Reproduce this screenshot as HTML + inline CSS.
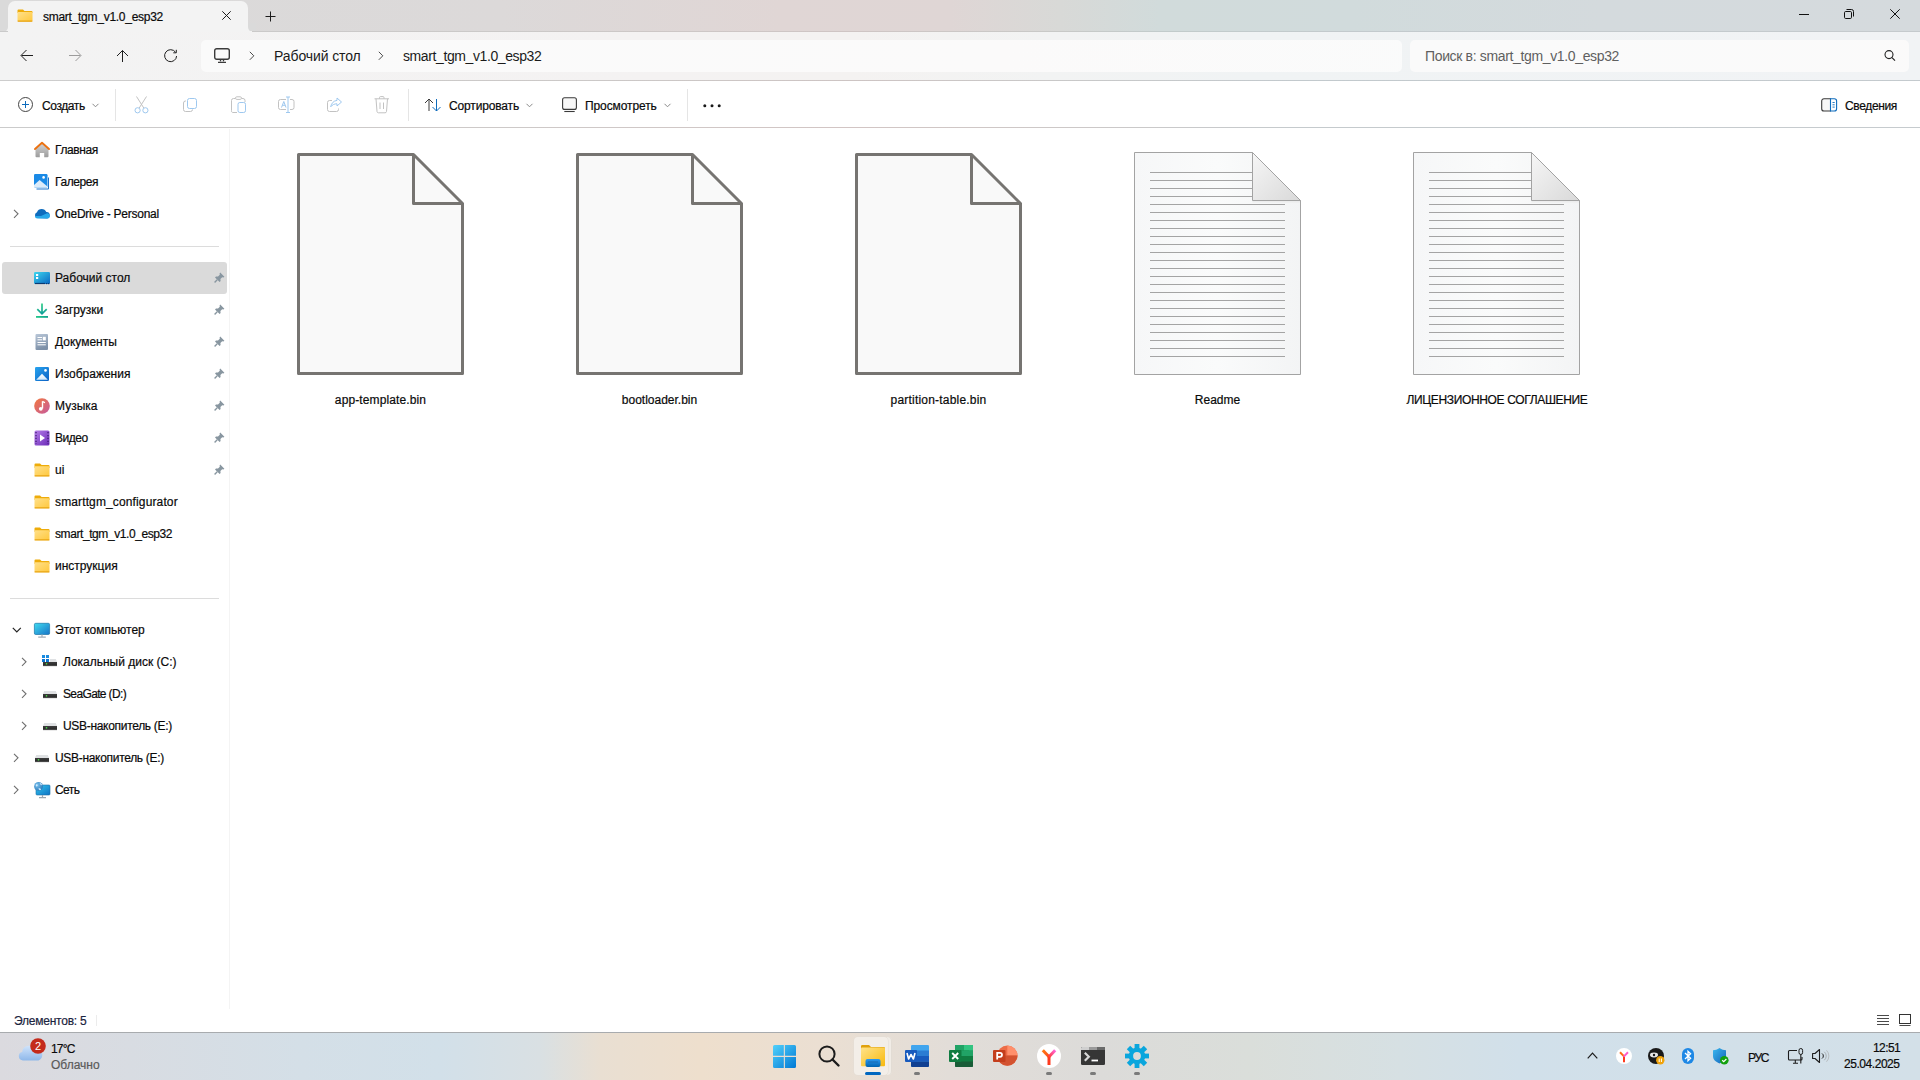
<!DOCTYPE html>
<html><head><meta charset="utf-8">
<style>
*{box-sizing:border-box}
html,body{margin:0;padding:0;width:1920px;height:1080px;overflow:hidden;background:#fff;font-family:"Liberation Sans",sans-serif;color:#1a1a1a}
.a{position:absolute}
.t{position:absolute;white-space:nowrap;font-size:12px;line-height:12px;color:#0a0a0a;-webkit-text-stroke:0.2px currentColor}
svg{position:absolute;overflow:visible}
#titlebar{left:0;top:0;width:1920px;height:32px;background:linear-gradient(90deg,#dadada 0px,#dcd9d9 500px,#e0d6d5 780px,#dfd6d5 950px,#d8d9d7 1060px,#d1dbdb 1160px,#d1dbdc 1350px,#d4dadd 1600px,#d5dadd 1920px)}
#addr{left:0;top:32px;width:1920px;height:48px;background:linear-gradient(90deg,#f3f3f3 0px,#f4f2f2 650px,#f4f2f1 850px,#f2f3f3 1050px,#f0f3f4 1250px,#f1f3f5 1920px)}
#tline{left:0;top:31px;width:1920px;height:1px;background:linear-gradient(90deg,#cacaca 0px,#cbc9c8 500px,#cfc5c4 850px,#c8c9c7 1060px,#c2cbcb 1160px,#c3cacd 1400px,#c5cacd 1920px)}
#aline{left:0;top:80px;width:1920px;height:1px;background:linear-gradient(90deg,#cdcdcd 0px,#cbc8c7 600px,#cdc4c3 850px,#c9c8c8 1050px,#c2c9cd 1300px,#c4cace 1920px)}
#cline{left:0;top:127px;width:1920px;height:1px;background:linear-gradient(90deg,#cbcbcb 0px,#cdc9c8 500px,#d2c5c4 850px,#cdc8c7 1050px,#c5cacd 1300px,#c6cbce 1920px)}
#cmd{left:0;top:81px;width:1920px;height:46px;background:#fff}
#tab{left:8px;top:1px;width:240px;height:31px;background:#f3f3f3;border-radius:7px 7px 0 0}
.box{position:absolute;top:40px;height:32px;background:linear-gradient(90deg,#fafafa 0px,#fbfafa 800px,#fafbfb 1300px);border-radius:5px}
.vsep{position:absolute;width:1px;background:#e5e5e5}
#side{left:0;top:128px;width:229px;height:880px;background:#fff}
#vline{left:229px;top:129px;width:1px;height:880px;background:#f4f4f4}
.row{position:absolute;left:0;width:229px;height:32px}
.row .t{top:10px}
.sel{position:absolute;left:2px;top:262px;width:225px;height:32px;background:#dadada;border-radius:3px}
.hsep{position:absolute;left:10px;width:209px;height:1px;background:#dcdcdc}
.lbl{position:absolute;top:394px;font-size:12px;line-height:12px;white-space:nowrap;text-align:center;width:260px;color:#0a0a0a;-webkit-text-stroke:0.2px currentColor}
#task{left:0;top:1032px;width:1920px;height:48px;background:linear-gradient(90deg,#dbdadf 0px,#d8dce2 130px,#d4dfe7 300px,#d2e0e9 440px,#d9e0e3 540px,#e9dfd2 600px,#eedfcd 700px,#ebdfd2 820px,#e2ddd8 950px,#dcdbd9 1100px,#dadeda 1250px,#d6e0e3 1400px,#d1e0ea 1520px,#d3e0e8 1920px);border-top:1px solid #a8abae}
</style></head><body>

<!-- TITLE BAR -->
<div id="titlebar" class="a"></div>
<div id="tab" class="a"></div>
<!-- tab flare -->
<div class="a" style="left:0;top:27px;width:8px;height:5px;background:#f3f3f3"></div>
<div class="a" style="left:0;top:23px;width:8px;height:9px;background:#dadada;border-radius:0 0 5px 0"></div>
<div class="a" style="left:248px;top:27px;width:8px;height:5px;background:#f3f3f3"></div>
<div class="a" style="left:248px;top:23px;width:8px;height:9px;background:#dadada;border-radius:0 0 0 5px"></div>

<div id="addr" class="a"></div><div id="tline" class="a"></div><div id="aline" class="a"></div><div class="a" style="left:8px;top:31px;width:244px;height:1px;background:#f3f3f3"></div>
<div id="cmd" class="a"></div><div id="cline" class="a"></div>


<!-- tab content -->
<svg style="left:17px;top:9px" width="16" height="13" viewBox="0 0 16 13">
 <defs><linearGradient id="fg" x1="0" y1="0" x2="1" y2="1"><stop offset="0" stop-color="#ffe08a"/><stop offset="1" stop-color="#ffc83d"/></linearGradient></defs>
 <path d="M1.5,0.5 H6 L7.5,2 H14.5 A1,1 0 0 1 15.5,3 V4 H0.5 V1.5 A1,1 0 0 1 1.5,0.5Z" fill="#eeac0a"/>
 <rect x="0.5" y="3" width="15" height="9.5" rx="1" fill="url(#fg)"/>
 <rect x="0.5" y="11.5" width="15" height="1.2" rx="0.6" fill="#e8a311"/>
</svg>
<div class="t" style="left:43px;top:11px;color:#0a0a0a;letter-spacing:-0.27px">smart_tgm_v1.0_esp32</div>
<svg style="left:222px;top:11px" width="9" height="9" viewBox="0 0 9 9"><path d="M0.3,0.3 L8.7,8.7 M8.7,0.3 L0.3,8.7" stroke="#1c1c1c" stroke-width="1"/></svg>
<svg style="left:265px;top:11px" width="11" height="11" viewBox="0 0 11 11"><path d="M5.5,0.5 V10.5 M0.5,5.5 H10.5" stroke="#1c1c1c" stroke-width="1"/></svg>

<!-- window controls -->
<svg style="left:1799px;top:13px" width="11" height="2"><rect x="0" y="1" width="10" height="1" fill="#111"/></svg>
<svg style="left:1843px;top:8px" width="12" height="12" viewBox="0 0 12 12"><rect x="1.5" y="3.5" width="7" height="7" rx="1.2" fill="none" stroke="#111" stroke-width="1"/><path d="M3.5,1.5 H8.5 A2,2 0 0 1 10.5,3.5 V8.5" fill="none" stroke="#111" stroke-width="1"/></svg>
<svg style="left:1890px;top:9px" width="10" height="10" viewBox="0 0 10 10"><path d="M0.3,0.3 L9.7,9.7 M9.7,0.3 L0.3,9.7" stroke="#111" stroke-width="1"/></svg>

<!-- nav buttons -->
<svg style="left:20px;top:49px" width="14" height="14" viewBox="0 0 14 14"><path d="M13,6.5 H1.5 M6.5,1 L1,6.5 L6.5,12" fill="none" stroke="#1f1f1f" stroke-width="1"/></svg>
<svg style="left:68px;top:49px" width="14" height="14" viewBox="0 0 14 14"><path d="M1,6.5 H12.5 M7.5,1 L13,6.5 L7.5,12" fill="none" stroke="#9c9c9c" stroke-width="1"/></svg>
<svg style="left:116px;top:49px" width="14" height="14" viewBox="0 0 14 14"><path d="M6.5,13 V1.5 M1,7 L6.5,1.5 L12,7" fill="none" stroke="#1f1f1f" stroke-width="1"/></svg>
<svg style="left:164px;top:49px" width="14" height="14" viewBox="0 0 14 14"><path d="M11.5,3.2 A6,6 0 1 0 12.6,7" fill="none" stroke="#1f1f1f" stroke-width="1"/><path d="M12.3,0.8 V3.8 H9.3" fill="none" stroke="#1f1f1f" stroke-width="1"/></svg>

<!-- address box -->
<div class="box" style="left:201px;width:1201px"></div>
<svg style="left:214px;top:48px" width="16" height="16" viewBox="0 0 16 16"><rect x="0.7" y="0.7" width="14.6" height="10.6" rx="2" fill="none" stroke="#3b3b3b" stroke-width="1.4"/><path d="M6.5,11.5 V13.2 M9.5,11.5 V13.2 M4,14.3 H12" stroke="#3b3b3b" stroke-width="1.3"/></svg>
<svg style="left:249px;top:51px" width="6" height="10" viewBox="0 0 6 10"><path d="M0.8,0.8 L4.8,4.8 L0.8,8.8" fill="none" stroke="#4a4a4a" stroke-width="1"/></svg>
<div class="t" style="left:274px;top:49px;font-size:14px;line-height:14px;color:#1a1a1a;-webkit-text-stroke:0;letter-spacing:-0.1px">Рабочий стол</div>
<svg style="left:378px;top:51px" width="6" height="10" viewBox="0 0 6 10"><path d="M0.8,0.8 L4.8,4.8 L0.8,8.8" fill="none" stroke="#4a4a4a" stroke-width="1"/></svg>
<div class="t" style="left:403px;top:49px;font-size:14px;line-height:14px;color:#1a1a1a;-webkit-text-stroke:0;letter-spacing:-0.4px">smart_tgm_v1.0_esp32</div>

<!-- search box -->
<div class="box" style="left:1410px;width:499px"></div>
<div class="t" style="left:1425px;top:49px;font-size:14px;line-height:14px;color:#5f5f5f;-webkit-text-stroke:0;letter-spacing:-0.35px">Поиск в: smart_tgm_v1.0_esp32</div>
<svg style="left:1884px;top:50px" width="12" height="12" viewBox="0 0 12 12"><circle cx="5" cy="4.6" r="4" fill="none" stroke="#222" stroke-width="1.1"/><path d="M8,7.6 L11,10.6" stroke="#222" stroke-width="1.3"/></svg>

<!-- command bar -->
<svg style="left:18px;top:97px" width="16" height="16" viewBox="0 0 16 16"><circle cx="7.5" cy="7.5" r="7" fill="none" stroke="#444" stroke-width="1"/><path d="M7.5,4 V11 M4,7.5 H11" stroke="#0f6cbd" stroke-width="1"/></svg>
<div class="t" style="left:42px;top:100px;letter-spacing:-0.4px">Создать</div>
<svg style="left:92px;top:103px" width="7" height="5" viewBox="0 0 7 5"><path d="M0.5,0.8 L3.5,3.8 L6.5,0.8" fill="none" stroke="#8a8a8a" stroke-width="1"/></svg>
<div class="vsep" style="left:115px;top:89px;height:32px"></div>

<!-- cut -->
<svg style="left:134px;top:96px" width="16" height="18" viewBox="0 0 16 18"><path d="M2.5,0.5 L9.8,12 M12.5,0.5 L5.2,12" stroke="#c2c2c2" stroke-width="1"/><circle cx="3.6" cy="14.3" r="2.6" fill="none" stroke="#9ec8ef" stroke-width="1"/><circle cx="11.4" cy="14.3" r="2.6" fill="none" stroke="#9ec8ef" stroke-width="1"/></svg>
<!-- copy -->
<svg style="left:183px;top:97px" width="15" height="16" viewBox="0 0 15 16"><path d="M3,4 H2.5 A2,2 0 0 0 0.5,6 V12.5 A2,2 0 0 0 2.5,14.5 H7.5 A2,2 0 0 0 9.5,12.5" fill="none" stroke="#c2c2c2" stroke-width="1"/><rect x="4.5" y="1.5" width="9" height="10" rx="2" fill="none" stroke="#9ec8ef" stroke-width="1"/></svg>
<!-- paste -->
<svg style="left:231px;top:96px" width="16" height="18" viewBox="0 0 16 18"><path d="M4,2.5 H2.5 A2,2 0 0 0 0.5,4.5 V14.5 A1.5,1.5 0 0 0 2,16.5 H6 M11,2.5 H12 A2,2 0 0 1 14,4.5 V6" fill="none" stroke="#c2c2c2" stroke-width="1"/><rect x="4.5" y="0.8" width="6" height="2.6" rx="1.3" fill="none" stroke="#c2c2c2" stroke-width="1"/><rect x="7" y="6.5" width="7.5" height="10" rx="1.8" fill="none" stroke="#9ec8ef" stroke-width="1"/></svg>
<!-- rename -->
<svg style="left:278px;top:96px" width="17" height="18" viewBox="0 0 17 18"><path d="M8,3.5 H2.5 A2,2 0 0 0 0.5,5.5 V11.5 A2,2 0 0 0 2.5,13.5 H8 M12,3.5 H14 A2,2 0 0 1 16,5.5 V11.5 A2,2 0 0 1 14,13.5 H12" fill="none" stroke="#c2c2c2" stroke-width="1"/><path d="M8,1 H12 M10,1 V16.5 M8,16.5 H12" fill="none" stroke="#9ec8ef" stroke-width="1"/><path d="M3.5,11.5 L5.8,5.5 L8,11.5 M4.4,9.3 H7.2" fill="none" stroke="#9ec8ef" stroke-width="1"/></svg>
<!-- share -->
<svg style="left:327px;top:97px" width="16" height="16" viewBox="0 0 16 16"><path d="M5,3.5 H2.5 A2,2 0 0 0 0.5,5.5 V12.5 A2,2 0 0 0 2.5,14.5 H9.5 A2,2 0 0 0 11.5,12.5 V11.5" fill="none" stroke="#c2c2c2" stroke-width="1"/><path d="M10,1 L14.5,5 L10,9 V6.8 C7.5,6.8 5.5,7.6 3.7,9.8 C4.4,6.3 6.5,3.8 10,3.4Z" fill="none" stroke="#9ec8ef" stroke-width="1" stroke-linejoin="round"/></svg>
<!-- delete -->
<svg style="left:374px;top:96px" width="16" height="18" viewBox="0 0 16 18"><path d="M0.5,2.8 H15 M5.5,2.8 V1.6 A1,1 0 0 1 6.5,0.6 H9 A1,1 0 0 1 10,1.6 V2.8 M2,2.8 L3,15.5 A1.5,1.5 0 0 0 4.5,16.8 H11 A1.5,1.5 0 0 0 12.5,15.5 L13.5,2.8 M6,6.5 V13 M9.5,6.5 V13" fill="none" stroke="#c2c2c2" stroke-width="1"/></svg>
<div class="vsep" style="left:408px;top:89px;height:32px"></div>

<!-- sort -->
<svg style="left:424px;top:98px" width="18" height="14" viewBox="0 0 18 14"><path d="M5,13 V1 M1,5 L5,1 L9,5" fill="none" stroke="#3a3a3a" stroke-width="1"/><path d="M12.5,1 V13 M8.5,9 L12.5,13 L16.5,9" fill="none" stroke="#0f6cbd" stroke-width="1"/></svg>
<div class="t" style="left:449px;top:100px;letter-spacing:-0.15px">Сортировать</div>
<svg style="left:526px;top:103px" width="7" height="5" viewBox="0 0 7 5"><path d="M0.5,0.8 L3.5,3.8 L6.5,0.8" fill="none" stroke="#8a8a8a" stroke-width="1"/></svg>

<!-- view -->
<svg style="left:562px;top:97px" width="15" height="16" viewBox="0 0 15 16"><rect x="0.6" y="0.8" width="13.8" height="11.6" rx="2" fill="#f7f7f7" stroke="#3a3a3a" stroke-width="1.1"/><path d="M2.3,14.5 H12.7" stroke="#3a3a3a" stroke-width="1.1"/></svg>
<div class="t" style="left:585px;top:100px;letter-spacing:-0.1px">Просмотреть</div>
<svg style="left:664px;top:103px" width="7" height="5" viewBox="0 0 7 5"><path d="M0.5,0.8 L3.5,3.8 L6.5,0.8" fill="none" stroke="#8a8a8a" stroke-width="1"/></svg>
<div class="vsep" style="left:687px;top:89px;height:32px"></div>
<svg style="left:703px;top:104px" width="18" height="4" viewBox="0 0 18 4"><circle cx="1.8" cy="1.8" r="1.5" fill="#1a1a1a"/><circle cx="9" cy="1.8" r="1.5" fill="#1a1a1a"/><circle cx="16.2" cy="1.8" r="1.5" fill="#1a1a1a"/></svg>

<!-- details -->
<svg style="left:1821px;top:98px" width="17" height="14" viewBox="0 0 17 14"><path d="M10,0.7 H3 A2.3,2.3 0 0 0 0.7,3 V10.7 A2.3,2.3 0 0 0 3,13 H10" fill="#f7f7f7" stroke="#3a3a3a" stroke-width="1.1"/><path d="M9.5,0.7 H13.3 A2.3,2.3 0 0 1 15.6,3 V10.7 A2.3,2.3 0 0 1 13.3,13 H9.5 Z" fill="#fff" stroke="#0f6cbd" stroke-width="1.1"/><path d="M11.5,4.5 H13.7 M11.5,6.8 H13.7 M11.5,9.1 H13.7" stroke="#0f6cbd" stroke-width="0.9"/></svg>
<div class="t" style="left:1845px;top:100px;letter-spacing:-0.35px">Сведения</div>

<!-- SIDEBAR -->
<div id="vline" class="a"></div>
<div class="sel"></div>
<div class="hsep" style="top:246px"></div>
<div class="hsep" style="top:598px"></div>
<div class="row" style="top:134px"><svg style="left:34px;top:7px" width="16" height="17" viewBox="0 0 16 17"><defs><linearGradient id="hg" x1="0" y1="0" x2="0" y2="1"><stop offset="0" stop-color="#d4d4d4"/><stop offset="1" stop-color="#9c9c9c"/></linearGradient></defs><path d="M1.5,7.5 L8,2.2 L14.5,7.5 V15.2 A1,1 0 0 1 13.5,16.2 H10.2 V12 H5.8 V16.2 H2.5 A1,1 0 0 1 1.5,15.2Z" fill="url(#hg)"/><path d="M1,8 L8,1.8 L15,8" fill="none" stroke="#ec7211" stroke-width="1.9" stroke-linejoin="round" stroke-linecap="round"/></svg><div class="t" style="left:55px;letter-spacing:-0.4px">Главная</div></div>
<div class="row" style="top:166px"><svg style="left:34px;top:8px" width="16" height="16" viewBox="0 0 16 16"><path d="M14,3.5 H15 V14.5 A1,1 0 0 1 14,15.5 H2.5 V14.5 H14Z" fill="#1b72c9"/><rect x="0" y="0" width="13.5" height="13.5" rx="1.2" fill="#1a8ae6"/><path d="M0,11 L5.6,6 L13.5,12.5 V13.5 H0Z" fill="#dcebf9"/><circle cx="9.6" cy="3.4" r="1.3" fill="#fff"/></svg><div class="t" style="left:55px;letter-spacing:-0.4px">Галерея</div></div>
<div class="row" style="top:198px"><svg style="left:13px;top:11px" width="7" height="10" viewBox="0 0 7 10"><path d="M1,0.8 L5,4.8 L1,8.8" fill="none" stroke="#6e6e6e" stroke-width="1.1"/></svg><svg style="left:34px;top:9px" width="16" height="14" viewBox="0 0 16 14"><path d="M3.5,11 A3,3 0 0 1 3,5.2 A5,5 0 0 1 12.3,5 A3.2,3.2 0 0 1 12.8,11.4Z" fill="#0f6cbd"/><path d="M1,9 A2.5,2.5 0 0 0 3.5,11.5 H13 A2.6,2.6 0 0 0 15.8,9 A2.6,2.6 0 0 0 12.5,6.4 L7,9 Z" fill="#28a8ea"/></svg><div class="t" style="left:55px;letter-spacing:-0.25px">OneDrive - Personal</div></div>
<div class="row" style="top:262px"><svg style="left:34px;top:10px" width="16" height="13" viewBox="0 0 16 13"><defs><linearGradient id="dg" x1="0" y1="0" x2="1" y2="1"><stop offset="0" stop-color="#3cd6ee"/><stop offset="1" stop-color="#0a66c2"/></linearGradient></defs><rect x="0" y="0" width="16" height="12" rx="1.3" fill="url(#dg)"/><rect x="2" y="2" width="2.2" height="2" fill="#fff"/><rect x="2" y="5" width="2.2" height="2" fill="#fff"/><path d="M1,11.5 H11" stroke="#0b3a72" stroke-width="1.2"/><rect x="12" y="11" width="1.2" height="1.2" fill="#0b3a72"/><rect x="14" y="11" width="1.2" height="1.2" fill="#0b3a72"/></svg><div class="t" style="left:55px">Рабочий стол</div><svg style="left:214px;top:10px" width="11" height="11" viewBox="0 0 11 11"><path d="M6.2,0.6 L10.4,4.8 L9.4,5.4 L8.2,5.2 L6.4,7 L6.6,9 L5.6,10 L1,5.4 L2,4.4 L4,4.6 L5.8,2.8 L5.6,1.6Z" fill="#8896a0"/><path d="M3.2,7.8 L0.6,10.4" stroke="#8896a0" stroke-width="1.4"/></svg></div>
<div class="row" style="top:294px"><svg style="left:34px;top:8px" width="16" height="16" viewBox="0 0 16 16"><defs><linearGradient id="dlg" x1="0" y1="0" x2="0" y2="1"><stop offset="0" stop-color="#2fcf86"/><stop offset="1" stop-color="#119d9a"/></linearGradient><linearGradient id="dlb" x1="0" y1="0" x2="1" y2="0"><stop offset="0" stop-color="#22c98a"/><stop offset="1" stop-color="#10a08e"/></linearGradient></defs><path d="M8,1.5 V12 M3.3,7.2 L8,11.9 L12.7,7.2" fill="none" stroke="url(#dlg)" stroke-width="1.7"/><rect x="2" y="14" width="12" height="1.8" fill="url(#dlb)"/></svg><div class="t" style="left:55px">Загрузки</div><svg style="left:214px;top:10px" width="11" height="11" viewBox="0 0 11 11"><path d="M6.2,0.6 L10.4,4.8 L9.4,5.4 L8.2,5.2 L6.4,7 L6.6,9 L5.6,10 L1,5.4 L2,4.4 L4,4.6 L5.8,2.8 L5.6,1.6Z" fill="#8896a0"/><path d="M3.2,7.8 L0.6,10.4" stroke="#8896a0" stroke-width="1.4"/></svg></div>
<div class="row" style="top:326px"><svg style="left:35px;top:8px" width="14" height="16" viewBox="0 0 14 16"><defs><linearGradient id="docg" x1="0" y1="0" x2="0.3" y2="1"><stop offset="0" stop-color="#b9c7d8"/><stop offset="1" stop-color="#7d90a8"/></linearGradient></defs><rect x="0.5" y="0" width="12.5" height="16" rx="1" fill="url(#docg)"/><path d="M2.5,3.5 H7 M2.5,5.8 H7 M2.5,8.5 H10.8 M2.5,10.8 H10.8" stroke="#fff" stroke-width="1"/><rect x="7.8" y="2.8" width="3" height="3.6" fill="#fff"/></svg><div class="t" style="left:55px">Документы</div><svg style="left:214px;top:10px" width="11" height="11" viewBox="0 0 11 11"><path d="M6.2,0.6 L10.4,4.8 L9.4,5.4 L8.2,5.2 L6.4,7 L6.6,9 L5.6,10 L1,5.4 L2,4.4 L4,4.6 L5.8,2.8 L5.6,1.6Z" fill="#8896a0"/><path d="M3.2,7.8 L0.6,10.4" stroke="#8896a0" stroke-width="1.4"/></svg></div>
<div class="row" style="top:358px"><svg style="left:35px;top:9px" width="15" height="15" viewBox="0 0 15 15"><defs><linearGradient id="picg" x1="0" y1="0" x2="1" y2="1"><stop offset="0" stop-color="#28a4ef"/><stop offset="1" stop-color="#0a60c4"/></linearGradient><linearGradient id="picm" x1="0" y1="0" x2="0" y2="1"><stop offset="0" stop-color="#ffffff"/><stop offset="1" stop-color="#cfe6fa"/></linearGradient></defs><rect x="0" y="0" width="14" height="14" rx="1.3" fill="url(#picg)"/><path d="M1.2,12.8 L7,6.8 L12.8,12.8Z" fill="url(#picm)"/><circle cx="10.5" cy="3.4" r="1.3" fill="#fff"/></svg><div class="t" style="left:55px">Изображения</div><svg style="left:214px;top:10px" width="11" height="11" viewBox="0 0 11 11"><path d="M6.2,0.6 L10.4,4.8 L9.4,5.4 L8.2,5.2 L6.4,7 L6.6,9 L5.6,10 L1,5.4 L2,4.4 L4,4.6 L5.8,2.8 L5.6,1.6Z" fill="#8896a0"/><path d="M3.2,7.8 L0.6,10.4" stroke="#8896a0" stroke-width="1.4"/></svg></div>
<div class="row" style="top:390px"><svg style="left:34px;top:8px" width="16" height="16" viewBox="0 0 16 16"><defs><linearGradient id="mg" x1="0" y1="0" x2="1" y2="1"><stop offset="0" stop-color="#f3783c"/><stop offset="1" stop-color="#c55aa0"/></linearGradient></defs><circle cx="8" cy="8" r="7.8" fill="url(#mg)"/><path d="M8.5,3.3 V10.5 M8.5,3.3 C9.6,4.2 10.4,4.4 11,4.6" fill="none" stroke="#fff" stroke-width="1.4"/><circle cx="6.8" cy="10.8" r="1.9" fill="#fff"/></svg><div class="t" style="left:55px">Музыка</div><svg style="left:214px;top:10px" width="11" height="11" viewBox="0 0 11 11"><path d="M6.2,0.6 L10.4,4.8 L9.4,5.4 L8.2,5.2 L6.4,7 L6.6,9 L5.6,10 L1,5.4 L2,4.4 L4,4.6 L5.8,2.8 L5.6,1.6Z" fill="#8896a0"/><path d="M3.2,7.8 L0.6,10.4" stroke="#8896a0" stroke-width="1.4"/></svg></div>
<div class="row" style="top:422px"><svg style="left:34px;top:8px" width="16" height="16" viewBox="0 0 16 16"><defs><linearGradient id="vg" x1="0" y1="0" x2="1" y2="1"><stop offset="0" stop-color="#b57de8"/><stop offset="1" stop-color="#6a2ab8"/></linearGradient></defs><rect x="0.5" y="0.5" width="15" height="15" rx="1.5" fill="url(#vg)"/><path d="M6,4.5 L11,8 L6,11.5Z" fill="#fff"/><path d="M2,2 V14 M14,2 V14" stroke="#3a1a6a" stroke-width="1.2" stroke-dasharray="1.3 1.6"/></svg><div class="t" style="left:55px;letter-spacing:-0.5px">Видео</div><svg style="left:214px;top:10px" width="11" height="11" viewBox="0 0 11 11"><path d="M6.2,0.6 L10.4,4.8 L9.4,5.4 L8.2,5.2 L6.4,7 L6.6,9 L5.6,10 L1,5.4 L2,4.4 L4,4.6 L5.8,2.8 L5.6,1.6Z" fill="#8896a0"/><path d="M3.2,7.8 L0.6,10.4" stroke="#8896a0" stroke-width="1.4"/></svg></div>
<div class="row" style="top:454px"><svg style="left:34px;top:9px" width="16" height="14" viewBox="0 0 16 14"><path d="M1.5,0.5 H6 L7.6,2 H14.5 A1,1 0 0 1 15.5,3 V5 H0.5 V1.5 A1,1 0 0 1 1.5,0.5Z" fill="#eeac0a"/><rect x="0.5" y="3.2" width="15" height="10" rx="1" fill="url(#fg)"/><rect x="0.5" y="12.3" width="15" height="1.2" rx="0.6" fill="#e9a514"/></svg><div class="t" style="left:55px">ui</div><svg style="left:214px;top:10px" width="11" height="11" viewBox="0 0 11 11"><path d="M6.2,0.6 L10.4,4.8 L9.4,5.4 L8.2,5.2 L6.4,7 L6.6,9 L5.6,10 L1,5.4 L2,4.4 L4,4.6 L5.8,2.8 L5.6,1.6Z" fill="#8896a0"/><path d="M3.2,7.8 L0.6,10.4" stroke="#8896a0" stroke-width="1.4"/></svg></div>
<div class="row" style="top:486px"><svg style="left:34px;top:9px" width="16" height="14" viewBox="0 0 16 14"><path d="M1.5,0.5 H6 L7.6,2 H14.5 A1,1 0 0 1 15.5,3 V5 H0.5 V1.5 A1,1 0 0 1 1.5,0.5Z" fill="#eeac0a"/><rect x="0.5" y="3.2" width="15" height="10" rx="1" fill="url(#fg)"/><rect x="0.5" y="12.3" width="15" height="1.2" rx="0.6" fill="#e9a514"/></svg><div class="t" style="left:55px;letter-spacing:0.13px">smarttgm_configurator</div></div>
<div class="row" style="top:518px"><svg style="left:34px;top:9px" width="16" height="14" viewBox="0 0 16 14"><path d="M1.5,0.5 H6 L7.6,2 H14.5 A1,1 0 0 1 15.5,3 V5 H0.5 V1.5 A1,1 0 0 1 1.5,0.5Z" fill="#eeac0a"/><rect x="0.5" y="3.2" width="15" height="10" rx="1" fill="url(#fg)"/><rect x="0.5" y="12.3" width="15" height="1.2" rx="0.6" fill="#e9a514"/></svg><div class="t" style="left:55px;letter-spacing:-0.42px">smart_tgm_v1.0_esp32</div></div>
<div class="row" style="top:550px"><svg style="left:34px;top:9px" width="16" height="14" viewBox="0 0 16 14"><path d="M1.5,0.5 H6 L7.6,2 H14.5 A1,1 0 0 1 15.5,3 V5 H0.5 V1.5 A1,1 0 0 1 1.5,0.5Z" fill="#eeac0a"/><rect x="0.5" y="3.2" width="15" height="10" rx="1" fill="url(#fg)"/><rect x="0.5" y="12.3" width="15" height="1.2" rx="0.6" fill="#e9a514"/></svg><div class="t" style="left:55px">инструкция</div></div>
<div class="row" style="top:614px"><svg style="left:12px;top:13px" width="10" height="6" viewBox="0 0 10 6"><path d="M0.8,0.8 L4.8,4.8 L8.8,0.8" fill="none" stroke="#222" stroke-width="1.2"/></svg><svg style="left:34px;top:8px" width="16" height="16" viewBox="0 0 16 16"><defs><linearGradient id="pcg" x1="0" y1="0" x2="1" y2="1"><stop offset="0" stop-color="#40dbef"/><stop offset="1" stop-color="#1874c8"/></linearGradient></defs><rect x="0.4" y="1.3" width="15.2" height="11.2" rx="1.3" fill="url(#pcg)" stroke="#1a75a8" stroke-width="0.7"/><path d="M8,12.5 V14.6 M4.2,15.2 H11.8" stroke="#a4aeb8" stroke-width="1.2"/></svg><div class="t" style="left:55px">Этот компьютер</div></div>
<div class="row" style="top:646px"><svg style="left:21px;top:11px" width="7" height="10" viewBox="0 0 7 10"><path d="M1,0.8 L5,4.8 L1,8.8" fill="none" stroke="#6e6e6e" stroke-width="1.1"/></svg><svg style="left:42px;top:9px" width="16" height="14" viewBox="0 0 16 14"><defs><linearGradient id="drgd1" x1="0" y1="0" x2="0" y2="1"><stop offset="0" stop-color="#3c3c3c"/><stop offset="1" stop-color="#262626"/></linearGradient></defs><path d="M8,4 H13.8 L15,7 H8Z" fill="#dfe1e3"/><rect x="1" y="7" width="14" height="4" fill="url(#drgd1)"/><rect x="1" y="10.5" width="14" height="0.8" fill="#8c8c8c" opacity="0.6"/><rect x="3.8" y="8.1" width="1.4" height="1.4" fill="#4ae34a"/><rect x="0" y="0" width="3" height="3" fill="#1a8be0"/><rect x="4" y="0" width="3" height="3" fill="#1a8be0"/><rect x="0" y="4" width="3" height="3" fill="#0f76d2"/><rect x="4" y="4" width="3" height="3" fill="#0f76d2"/></svg><div class="t" style="left:63px">Локальный диск (C:)</div></div>
<div class="row" style="top:678px"><svg style="left:21px;top:11px" width="7" height="10" viewBox="0 0 7 10"><path d="M1,0.8 L5,4.8 L1,8.8" fill="none" stroke="#6e6e6e" stroke-width="1.1"/></svg><svg style="left:42px;top:9px" width="16" height="14" viewBox="0 0 16 14"><defs><linearGradient id="drgd2" x1="0" y1="0" x2="0" y2="1"><stop offset="0" stop-color="#3c3c3c"/><stop offset="1" stop-color="#262626"/></linearGradient></defs><path d="M2.2,4 H13.8 L15,7 H1Z" fill="#dfe1e3"/><rect x="1" y="7" width="14" height="4" fill="url(#drgd2)"/><rect x="1" y="10.5" width="14" height="0.8" fill="#8c8c8c" opacity="0.6"/><rect x="3.8" y="8.1" width="1.4" height="1.4" fill="#4ae34a"/></svg><div class="t" style="left:63px;letter-spacing:-0.64px">SeaGate (D:)</div></div>
<div class="row" style="top:710px"><svg style="left:21px;top:11px" width="7" height="10" viewBox="0 0 7 10"><path d="M1,0.8 L5,4.8 L1,8.8" fill="none" stroke="#6e6e6e" stroke-width="1.1"/></svg><svg style="left:42px;top:9px" width="16" height="14" viewBox="0 0 16 14"><defs><linearGradient id="drgd3" x1="0" y1="0" x2="0" y2="1"><stop offset="0" stop-color="#3c3c3c"/><stop offset="1" stop-color="#262626"/></linearGradient></defs><path d="M2.2,4 H13.8 L15,7 H1Z" fill="#dfe1e3"/><rect x="1" y="7" width="14" height="4" fill="url(#drgd3)"/><rect x="1" y="10.5" width="14" height="0.8" fill="#8c8c8c" opacity="0.6"/><rect x="3.8" y="8.1" width="1.4" height="1.4" fill="#4ae34a"/></svg><div class="t" style="left:63px;letter-spacing:-0.31px">USB-накопитель (E:)</div></div>
<div class="row" style="top:742px"><svg style="left:13px;top:11px" width="7" height="10" viewBox="0 0 7 10"><path d="M1,0.8 L5,4.8 L1,8.8" fill="none" stroke="#6e6e6e" stroke-width="1.1"/></svg><svg style="left:34px;top:9px" width="16" height="14" viewBox="0 0 16 14"><defs><linearGradient id="drgd4" x1="0" y1="0" x2="0" y2="1"><stop offset="0" stop-color="#3c3c3c"/><stop offset="1" stop-color="#262626"/></linearGradient></defs><path d="M2.2,4 H13.8 L15,7 H1Z" fill="#dfe1e3"/><rect x="1" y="7" width="14" height="4" fill="url(#drgd4)"/><rect x="1" y="10.5" width="14" height="0.8" fill="#8c8c8c" opacity="0.6"/><rect x="3.8" y="8.1" width="1.4" height="1.4" fill="#4ae34a"/></svg><div class="t" style="left:55px;letter-spacing:-0.31px">USB-накопитель (E:)</div></div>
<div class="row" style="top:774px"><svg style="left:13px;top:11px" width="7" height="10" viewBox="0 0 7 10"><path d="M1,0.8 L5,4.8 L1,8.8" fill="none" stroke="#6e6e6e" stroke-width="1.1"/></svg><svg style="left:35px;top:8px" width="16" height="18" viewBox="0 0 16 18"><defs><linearGradient id="ntg" x1="0" y1="0" x2="1" y2="1"><stop offset="0" stop-color="#33c6ee"/><stop offset="1" stop-color="#0f73c4"/></linearGradient><radialGradient id="glg" cx="0.35" cy="0.35" r="0.7"><stop offset="0" stop-color="#7cc4f0"/><stop offset="1" stop-color="#2a78b8"/></radialGradient></defs><rect x="1" y="3" width="14" height="10" rx="1" fill="url(#ntg)" stroke="#1c6fa8" stroke-width="0.6"/><path d="M7.5,13 V15 M4,15.6 H11" stroke="#9aa6b0" stroke-width="1.2"/><circle cx="3.5" cy="4.4" r="4.4" fill="url(#glg)"/><path d="M1,2.5 C2,2 3,2.8 2.6,3.8 C2.2,4.8 1.2,4.5 0.8,4 M3.5,6.3 C4.5,6 5.8,6.5 6.2,7.5 L5,8.3 C4,8 3.5,7.2 3.5,6.3Z M4.5,0.8 C5.5,1 6.8,2 7.2,3 L6,3.2 C5.2,2.5 4.8,1.6 4.5,0.8Z" fill="#dcefff" opacity="0.9"/></svg><div class="t" style="left:55px;letter-spacing:-0.6px">Сеть</div></div>
<!-- CONTENT -->
<svg style="left:297px;top:153px" width="167" height="222" viewBox="0 0 167 222"><path d="M1.5,1.5 H116.5 L165.5,50.5 V220.5 H1.5Z" fill="#f9f9f9" stroke="#767471" stroke-width="3" stroke-linejoin="round"/><path d="M116.5,1.5 V50.5 H165.5" fill="none" stroke="#767471" stroke-width="3" stroke-linejoin="round"/></svg>
<svg style="left:576px;top:153px" width="167" height="222" viewBox="0 0 167 222"><path d="M1.5,1.5 H116.5 L165.5,50.5 V220.5 H1.5Z" fill="#f9f9f9" stroke="#767471" stroke-width="3" stroke-linejoin="round"/><path d="M116.5,1.5 V50.5 H165.5" fill="none" stroke="#767471" stroke-width="3" stroke-linejoin="round"/></svg>
<svg style="left:855px;top:153px" width="167" height="222" viewBox="0 0 167 222"><path d="M1.5,1.5 H116.5 L165.5,50.5 V220.5 H1.5Z" fill="#f9f9f9" stroke="#767471" stroke-width="3" stroke-linejoin="round"/><path d="M116.5,1.5 V50.5 H165.5" fill="none" stroke="#767471" stroke-width="3" stroke-linejoin="round"/></svg>
<svg style="left:1134px;top:152px" width="167" height="224" viewBox="0 0 167 224"><defs><linearGradient id="pg1134" x1="0" y1="0" x2="1" y2="0"><stop offset="0" stop-color="#f6f7f8"/><stop offset="0.5" stop-color="#fafbfb"/><stop offset="1" stop-color="#f3f4f5"/></linearGradient><linearGradient id="fd1134" x1="0" y1="0" x2="1" y2="1"><stop offset="0" stop-color="#f6f6f6"/><stop offset="1" stop-color="#d9d9d9"/></linearGradient></defs><path d="M0.5,0.5 H118.5 L166.5,48.5 V222.5 H0.5Z" fill="url(#pg1134)" stroke="#a3a3a3" stroke-width="1"/><path d="M16,20.5 H118" stroke="#a4a4a4" stroke-width="1"/><path d="M16,28.5 H118" stroke="#a4a4a4" stroke-width="1"/><path d="M16,36.5 H118" stroke="#a4a4a4" stroke-width="1"/><path d="M16,44.5 H118" stroke="#a4a4a4" stroke-width="1"/><path d="M16,52.5 H151" stroke="#a4a4a4" stroke-width="1"/><path d="M16,60.5 H151" stroke="#a4a4a4" stroke-width="1"/><path d="M16,68.5 H151" stroke="#a4a4a4" stroke-width="1"/><path d="M16,76.5 H151" stroke="#a4a4a4" stroke-width="1"/><path d="M16,84.5 H151" stroke="#a4a4a4" stroke-width="1"/><path d="M16,92.5 H151" stroke="#a4a4a4" stroke-width="1"/><path d="M16,100.5 H151" stroke="#a4a4a4" stroke-width="1"/><path d="M16,108.5 H151" stroke="#a4a4a4" stroke-width="1"/><path d="M16,116.5 H151" stroke="#a4a4a4" stroke-width="1"/><path d="M16,124.5 H151" stroke="#a4a4a4" stroke-width="1"/><path d="M16,132.5 H151" stroke="#a4a4a4" stroke-width="1"/><path d="M16,140.5 H151" stroke="#a4a4a4" stroke-width="1"/><path d="M16,148.5 H151" stroke="#a4a4a4" stroke-width="1"/><path d="M16,156.5 H151" stroke="#a4a4a4" stroke-width="1"/><path d="M16,164.5 H151" stroke="#a4a4a4" stroke-width="1"/><path d="M16,172.5 H151" stroke="#a4a4a4" stroke-width="1"/><path d="M16,180.5 H151" stroke="#a4a4a4" stroke-width="1"/><path d="M16,188.5 H151" stroke="#a4a4a4" stroke-width="1"/><path d="M16,196.5 H151" stroke="#a4a4a4" stroke-width="1"/><path d="M16,204.5 H151" stroke="#a4a4a4" stroke-width="1"/><path d="M118.5,49 H166" stroke="#e8e8e8" stroke-width="3" opacity="0.6"/><path d="M118.5,0.5 L166.5,48.5 H118.5Z" fill="url(#fd1134)" stroke="#a3a3a3" stroke-width="1" stroke-linejoin="round"/></svg>
<svg style="left:1413px;top:152px" width="167" height="224" viewBox="0 0 167 224"><defs><linearGradient id="pg1413" x1="0" y1="0" x2="1" y2="0"><stop offset="0" stop-color="#f6f7f8"/><stop offset="0.5" stop-color="#fafbfb"/><stop offset="1" stop-color="#f3f4f5"/></linearGradient><linearGradient id="fd1413" x1="0" y1="0" x2="1" y2="1"><stop offset="0" stop-color="#f6f6f6"/><stop offset="1" stop-color="#d9d9d9"/></linearGradient></defs><path d="M0.5,0.5 H118.5 L166.5,48.5 V222.5 H0.5Z" fill="url(#pg1413)" stroke="#a3a3a3" stroke-width="1"/><path d="M16,20.5 H118" stroke="#a4a4a4" stroke-width="1"/><path d="M16,28.5 H118" stroke="#a4a4a4" stroke-width="1"/><path d="M16,36.5 H118" stroke="#a4a4a4" stroke-width="1"/><path d="M16,44.5 H118" stroke="#a4a4a4" stroke-width="1"/><path d="M16,52.5 H151" stroke="#a4a4a4" stroke-width="1"/><path d="M16,60.5 H151" stroke="#a4a4a4" stroke-width="1"/><path d="M16,68.5 H151" stroke="#a4a4a4" stroke-width="1"/><path d="M16,76.5 H151" stroke="#a4a4a4" stroke-width="1"/><path d="M16,84.5 H151" stroke="#a4a4a4" stroke-width="1"/><path d="M16,92.5 H151" stroke="#a4a4a4" stroke-width="1"/><path d="M16,100.5 H151" stroke="#a4a4a4" stroke-width="1"/><path d="M16,108.5 H151" stroke="#a4a4a4" stroke-width="1"/><path d="M16,116.5 H151" stroke="#a4a4a4" stroke-width="1"/><path d="M16,124.5 H151" stroke="#a4a4a4" stroke-width="1"/><path d="M16,132.5 H151" stroke="#a4a4a4" stroke-width="1"/><path d="M16,140.5 H151" stroke="#a4a4a4" stroke-width="1"/><path d="M16,148.5 H151" stroke="#a4a4a4" stroke-width="1"/><path d="M16,156.5 H151" stroke="#a4a4a4" stroke-width="1"/><path d="M16,164.5 H151" stroke="#a4a4a4" stroke-width="1"/><path d="M16,172.5 H151" stroke="#a4a4a4" stroke-width="1"/><path d="M16,180.5 H151" stroke="#a4a4a4" stroke-width="1"/><path d="M16,188.5 H151" stroke="#a4a4a4" stroke-width="1"/><path d="M16,196.5 H151" stroke="#a4a4a4" stroke-width="1"/><path d="M16,204.5 H151" stroke="#a4a4a4" stroke-width="1"/><path d="M118.5,49 H166" stroke="#e8e8e8" stroke-width="3" opacity="0.6"/><path d="M118.5,0.5 L166.5,48.5 H118.5Z" fill="url(#fd1413)" stroke="#a3a3a3" stroke-width="1" stroke-linejoin="round"/></svg>
<div class="lbl" style="left:250.5px;letter-spacing:0.12px">app-template.bin</div>
<div class="lbl" style="left:529.5px">bootloader.bin</div>
<div class="lbl" style="left:808.5px;letter-spacing:0.2px">partition-table.bin</div>
<div class="lbl" style="left:1087.5px">Readme</div>
<div class="lbl" style="left:1367px;letter-spacing:-0.35px">ЛИЦЕНЗИОННОЕ СОГЛАШЕНИЕ</div>
<div class="t" style="left:14px;top:1015px;letter-spacing:-0.23px;color:#1b2440">Элементов: 5</div>
<div class="vsep" style="left:96px;top:1015px;height:11px;background:#ececec"></div>
<svg style="left:1877px;top:1015px" width="12" height="10" viewBox="0 0 12 10"><path d="M0,0.5 H12 M0,3.5 H12 M0,6.5 H12 M0,9.5 H12" stroke="#4a4a4a" stroke-width="1"/></svg>
<svg style="left:1899px;top:1014px" width="12" height="12" viewBox="0 0 12 12"><rect x="0.5" y="0.5" width="11" height="9" fill="none" stroke="#333" stroke-width="1"/><path d="M0.5,11.5 H11.5" stroke="#4a4a4a" stroke-width="1"/></svg>
<!-- TASKBAR -->
<div id="task" class="a"></div>
<svg style="left:18px;top:1044px" width="26" height="18" viewBox="0 0 26 18"><defs><linearGradient id="cg" x1="0" y1="0" x2="0" y2="1"><stop offset="0" stop-color="#cfe3fb"/><stop offset="1" stop-color="#8fb8ea"/></linearGradient></defs><path d="M5,16.5 A4.3,4.3 0 0 1 4.2,8 A6.5,6.5 0 0 1 16.5,5.5 A5.2,5.2 0 0 1 20.5,16.5Z" fill="url(#cg)"/></svg>
<svg style="left:30px;top:1038px" width="16" height="16" viewBox="0 0 16 16"><circle cx="8" cy="8" r="7.8" fill="#c42b1c"/><text x="8" y="12" text-anchor="middle" font-family="Liberation Sans" font-size="11" fill="#fff">2</text></svg>
<div class="t" style="left:51px;top:1043px;color:#0a0a0a;letter-spacing:-0.8px">17°C</div>
<div class="t" style="left:51px;top:1059px;color:#5a5a5a">Облачно</div>
<svg style="left:773px;top:1045px" width="23" height="23" viewBox="0 0 23 23"><defs><linearGradient id="wg" x1="0" y1="0" x2="1" y2="1"><stop offset="0" stop-color="#52d1fb"/><stop offset="1" stop-color="#0078d4"/></linearGradient></defs><path d="M0,1.5 A1.5,1.5 0 0 1 1.5,0 H10.8 V10.8 H0Z M11.9,0 H21.5 A1.5,1.5 0 0 1 23,1.5 V10.8 H11.9Z M0,11.9 H10.8 V23 H1.5 A1.5,1.5 0 0 1 0,21.5Z M11.9,11.9 H23 V21.5 A1.5,1.5 0 0 1 21.5,23 H11.9Z" fill="url(#wg)"/></svg>
<svg style="left:818px;top:1045px" width="22" height="22" viewBox="0 0 22 22"><circle cx="9" cy="9" r="7.6" fill="none" stroke="#1c1c1c" stroke-width="2"/><path d="M14.5,14.5 L20.5,20.5" stroke="#1c1c1c" stroke-width="2.4" stroke-linecap="round"/></svg>
<div class="a" style="left:887px;top:1037px;width:5px;height:38px;background:#f1ece6;border-radius:0 4px 4px 0;box-shadow:inset -1px 0 0 #e2dcd4"></div>
<div class="a" style="left:854px;top:1037px;width:34px;height:38px;background:#f3eee8;border-radius:4px;box-shadow:0 0 0 0.5px #e3ddd5"></div>
<svg style="left:861px;top:1045px" width="24" height="22" viewBox="0 0 24 22"><defs><linearGradient id="efg" x1="0" y1="0" x2="1" y2="1"><stop offset="0" stop-color="#ffe38a"/><stop offset="1" stop-color="#f8b90d"/></linearGradient><linearGradient id="ebg" x1="0" y1="0" x2="0" y2="1"><stop offset="0" stop-color="#2b9af3"/><stop offset="1" stop-color="#0063b1"/></linearGradient></defs><path d="M1.2,0 H8 L10,2 H22.8 A1.2,1.2 0 0 1 24,3.2 V6 H0 V1.2 A1.2,1.2 0 0 1 1.2,0Z" fill="#e0a10d"/><rect x="0" y="2.4" width="24" height="18.8" rx="1" fill="url(#efg)"/><rect x="4.5" y="14" width="15" height="8" rx="2" fill="url(#ebg)"/><path d="M7,17 H17" stroke="#1a6ab3" stroke-width="1"/></svg>
<div class="a" style="left:865px;top:1072px;width:16px;height:3px;border-radius:1.5px;background:#0067c0"></div>
<svg style="left:905px;top:1045px" width="24" height="22" viewBox="0 0 24 22"><rect x="6" y="0" width="18" height="22" rx="1.2" fill="#41a5ee"/><rect x="6" y="5.5" width="18" height="5.5" fill="#2b7cd3"/><rect x="6" y="11" width="18" height="5.5" fill="#185abd"/><path d="M6,16.5 H24 V20.8 A1.2,1.2 0 0 1 22.8,22 H7.2 A1.2,1.2 0 0 1 6,20.8Z" fill="#103f91"/><rect x="0" y="5" width="12" height="12" rx="1" fill="#185abd"/><path d="M2,8 L3.6,14 L6,9.5 L8.4,14 L10,8" fill="none" stroke="#fff" stroke-width="1.6" stroke-linejoin="round"/></svg>
<svg style="left:949px;top:1045px" width="24" height="22" viewBox="0 0 24 22"><rect x="6" y="0" width="18" height="22" rx="1.2" fill="#107c41"/><rect x="6" y="0" width="9" height="5.5" fill="#21a366"/><rect x="15" y="0" width="9" height="5.5" fill="#33c481"/><path d="M22.8,0 A1.2,1.2 0 0 1 24,1.2 V5.5 H20Z" fill="#33c481"/><rect x="6" y="5.5" width="18" height="5.5" fill="#21a366"/><rect x="6" y="11" width="18" height="5.5" fill="#107c41"/><path d="M6,16.5 H24 V20.8 A1.2,1.2 0 0 1 22.8,22 H7.2 A1.2,1.2 0 0 1 6,20.8Z" fill="#185c37"/><rect x="0" y="5" width="12.5" height="12" rx="1" fill="#107c41"/><path d="M3.2,8 L9.2,14 M9.2,8 L3.2,14" stroke="#fff" stroke-width="1.9"/></svg>
<svg style="left:993px;top:1045px" width="25" height="22" viewBox="0 0 25 22"><circle cx="14.3" cy="10.6" r="10.2" fill="#ed6c47"/><path d="M14.3,0.4 A10.2,10.2 0 0 1 24.5,10.6 H14.3Z" fill="#ff8f6b"/><path d="M4.1,10.6 A10.2,10.2 0 0 0 24.5,10.6Z" fill="#d35230"/><rect x="0" y="5" width="12.5" height="12" rx="1" fill="#c43e1c"/><path d="M4.2,14.5 V7.8 H7 A2,2 0 0 1 7,11.8 H4.2" fill="none" stroke="#fff" stroke-width="1.8"/></svg>
<svg style="left:1037px;top:1044px" width="24" height="24" viewBox="0 0 24 24"><defs><linearGradient id="yl" x1="0" y1="0" x2="1" y2="1"><stop offset="0" stop-color="#ff7a12"/><stop offset="1" stop-color="#ff4a1c"/></linearGradient><linearGradient id="yr" x1="0" y1="1" x2="1" y2="0"><stop offset="0" stop-color="#ff3a3a"/><stop offset="1" stop-color="#ff66e0"/></linearGradient></defs><circle cx="12" cy="12" r="12" fill="#fff"/><path d="M12,21 V12.3" stroke="#ff3b1e" stroke-width="3" stroke-linecap="butt"/><path d="M12,12.8 L5.8,6.2" stroke="url(#yl)" stroke-width="3" stroke-linecap="butt"/><path d="M12,12.8 L18.2,6.2" stroke="url(#yr)" stroke-width="3" stroke-linecap="butt"/></svg>
<svg style="left:1081px;top:1047px" width="24" height="18" viewBox="0 0 24 18"><rect x="0" y="0" width="24" height="18" rx="1.3" fill="#363636"/><path d="M1.3,0 H8 V3 H0 V1.3 A1.3,1.3 0 0 1 1.3,0Z" fill="#cfcfcf"/><rect x="8" y="0" width="8" height="3" fill="#9a9a9a"/><path d="M16,0 H22.7 A1.3,1.3 0 0 1 24,1.3 V3 H16Z" fill="#6a6a6a"/><path d="M3.8,5.8 L7.8,9.8 L3.8,13.8" fill="none" stroke="#d8d8d8" stroke-width="2.2"/><path d="M10.5,13.5 H17" stroke="#fff" stroke-width="1.8"/></svg>
<svg style="left:1125px;top:1044px" width="24" height="24" viewBox="0 0 24 24"><g fill="#0aa6dd"><rect x="9.6" y="0" width="4.8" height="5" transform="rotate(0 12 12)"/><rect x="9.6" y="0" width="4.8" height="5" transform="rotate(45 12 12)"/><rect x="9.6" y="0" width="4.8" height="5" transform="rotate(90 12 12)"/><rect x="9.6" y="0" width="4.8" height="5" transform="rotate(135 12 12)"/><rect x="9.6" y="0" width="4.8" height="5" transform="rotate(180 12 12)"/><rect x="9.6" y="0" width="4.8" height="5" transform="rotate(225 12 12)"/><rect x="9.6" y="0" width="4.8" height="5" transform="rotate(270 12 12)"/><rect x="9.6" y="0" width="4.8" height="5" transform="rotate(315 12 12)"/><circle cx="12" cy="12" r="8.3"/></g><circle cx="12" cy="12" r="3.9" fill="#dcdbd9"/></svg>
<div class="a" style="left:914px;top:1072px;width:6px;height:3px;border-radius:1.5px;background:#7a7a7a"></div>
<div class="a" style="left:1046px;top:1072px;width:6px;height:3px;border-radius:1.5px;background:#7a7a7a"></div>
<div class="a" style="left:1090px;top:1072px;width:6px;height:3px;border-radius:1.5px;background:#7a7a7a"></div>
<div class="a" style="left:1134px;top:1072px;width:6px;height:3px;border-radius:1.5px;background:#7a7a7a"></div>
<svg style="left:1587px;top:1052px" width="11" height="7" viewBox="0 0 11 7"><path d="M0.7,6.3 L5.5,1.2 L10.3,6.3" fill="none" stroke="#1c1c1c" stroke-width="1.2"/></svg>
<svg style="left:1616px;top:1048px" width="16" height="16" viewBox="0 0 16 16"><circle cx="8" cy="8" r="8" fill="#fff"/><path d="M8,14.2 V8.3" stroke="#ff3b1e" stroke-width="2"/><path d="M8.3,8.6 L4,4.2" stroke="#ff6a14" stroke-width="2"/><path d="M7.7,8.6 L12,4.2" stroke="#ff5ac8" stroke-width="2"/></svg>
<svg style="left:1648px;top:1048px" width="17" height="17" viewBox="0 0 17 17"><circle cx="8" cy="8" r="8" fill="#1a1a1a"/><ellipse cx="6" cy="7" rx="4" ry="2.4" fill="#e8e8e8"/><circle cx="6" cy="7" r="1.2" fill="#1a1a1a"/><circle cx="12.3" cy="12.3" r="4.2" fill="#f0a30a"/><path d="M11.2,10.5 V14 M13.4,10.5 V14" stroke="#fff" stroke-width="1"/></svg>
<svg style="left:1682px;top:1048px" width="12" height="16" viewBox="0 0 12 16"><rect x="0" y="0" width="12" height="16" rx="6" fill="#1e88e5"/><path d="M3,5 L8.6,10.3 L6,12.8 V3.2 L8.6,5.7 L3,11" fill="none" stroke="#fff" stroke-width="1.3"/></svg>
<svg style="left:1713px;top:1048px" width="16" height="17" viewBox="0 0 16 17"><defs><linearGradient id="dfg" x1="0" y1="0" x2="1" y2="1"><stop offset="0" stop-color="#3bb8f0"/><stop offset="1" stop-color="#1463b8"/></linearGradient></defs><path d="M6.5,0 C8.8,1.6 10.8,2.2 13,2.2 V8 C13,11.5 10.5,13.8 6.5,15.5 C2.5,13.8 0,11.5 0,8 V2.2 C2.2,2.2 4.2,1.6 6.5,0Z" fill="url(#dfg)"/><circle cx="11.3" cy="12.3" r="4.3" fill="#13a10e"/><path d="M9.2,12.3 L10.7,13.7 L13.4,11" fill="none" stroke="#fff" stroke-width="1.2"/></svg>
<div class="t" style="left:1748px;top:1052px;font-size:12px;line-height:12px;color:#0a0a0a;letter-spacing:-1.3px">РУС</div>
<svg style="left:1788px;top:1048px" width="17" height="16" viewBox="0 0 17 16"><path d="M9,2.5 H1.5 A1,1 0 0 0 0.5,3.5 V11 A1,1 0 0 0 1.5,12 H13 A1,1 0 0 0 14,11 V9" fill="none" stroke="#1c1c1c" stroke-width="1.1"/><path d="M5,15.3 H10 M7.3,12 V15.3" stroke="#1c1c1c" stroke-width="1.1"/><rect x="11" y="0.5" width="3.6" height="6" rx="1.8" fill="none" stroke="#1c1c1c" stroke-width="1"/><path d="M12.8,6.5 V15.5" stroke="#1c1c1c" stroke-width="1.1"/></svg>
<svg style="left:1812px;top:1048px" width="17" height="16" viewBox="0 0 17 16"><path d="M0.6,5.5 H3 L7.5,1.5 V14.5 L3,10.5 H0.6Z" fill="none" stroke="#1c1c1c" stroke-width="1.1" stroke-linejoin="round"/><path d="M10,5.5 A3,3 0 0 1 10,10.5" fill="none" stroke="#1c1c1c" stroke-width="1"/><path d="M12.3,3.8 A5.5,5.5 0 0 1 12.3,12.2" fill="none" stroke="#a8aeb2" stroke-width="1"/><path d="M14.5,2.3 A8,8 0 0 1 14.5,13.7" fill="none" stroke="#b8bdc0" stroke-width="1"/></svg>
<div class="t" style="left:1873px;top:1042px;color:#0a0a0a;letter-spacing:-0.6px">12:51</div>
<div class="t" style="left:1844px;top:1058px;color:#0a0a0a;letter-spacing:-0.45px">25.04.2025</div>
</body></html>
